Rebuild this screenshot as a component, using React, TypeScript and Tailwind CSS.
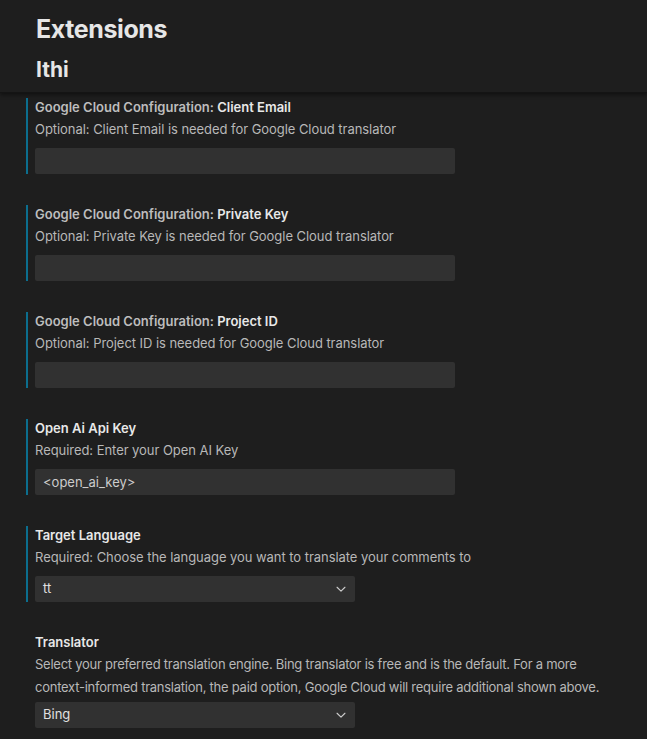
import React from 'react';

type Setting = {
  prefix?: string;
  title: string;
  desc: string[];
  kind: 'input' | 'select';
  value?: string;
  modified?: boolean;
};

const settings: Setting[] = [
  { prefix: 'Google Cloud Configuration: ', title: 'Client Email', desc: ['Optional: Client Email is needed for Google Cloud translator'], kind: 'input', modified: true },
  { prefix: 'Google Cloud Configuration: ', title: 'Private Key', desc: ['Optional: Private Key is needed for Google Cloud translator'], kind: 'input', modified: true },
  { prefix: 'Google Cloud Configuration: ', title: 'Project ID', desc: ['Optional: Project ID is needed for Google Cloud translator'], kind: 'input', modified: true },
  { title: 'Open Ai Api Key', desc: ['Required: Enter your Open AI Key'], kind: 'input', value: '<open_ai_key>', modified: true },
  { title: 'Target Language', desc: ['Required: Choose the language you want to translate your comments to'], kind: 'select', value: 'tt', modified: true },
  {
    title: 'Translator',
    desc: [
      'Select your preferred translation engine. Bing translator is free and is the default. For a more',
      'context-informed translation, the paid option, Google Cloud will require additional shown above.',
    ],
    kind: 'select',
    value: 'Bing',
  },
];

const Chevron = () => (
  <svg width="14" height="14" viewBox="0 0 16 16" fill="none" stroke="#cccccc" strokeWidth="1.3" strokeLinecap="round" strokeLinejoin="round">
    <path d="M3.5 6l4.5 4.5L12.5 6" />
  </svg>
);

function SettingItem({ s }: { s: Setting }) {
  const multi = s.desc.length > 1;
  return (
    <div className="pl-[26px] mb-[31px]">
      <div className={`border-l-2 pl-[7px] ${s.modified ? 'border-[#0c6e8e]' : 'border-transparent'}`}>
        <div className="h-[18px] leading-[18px] text-[13px] font-semibold text-[#bdbdbd]">
          {s.prefix}
          <span className="text-[#e8e8e8]">{s.title}</span>
        </div>
        <div className={`mt-[2px] text-[13px] leading-[23px] text-[#b8b8b8] ${multi ? 'tracking-[-0.25px]' : 'tracking-[-0.05px]'}`}>
          {s.desc.map((d, i) => (
            <div key={i}>{d}</div>
          ))}
        </div>
        {s.kind === 'input' ? (
          <div className="mt-[7px] h-[26px] w-[420px] rounded-[2px] bg-[#313131] px-[8px] text-[13px] leading-[26px] text-[#cccccc]">
            {s.value}
          </div>
        ) : (
          <div className={`${multi ? 'mt-[3px]' : 'mt-[7px]'} flex h-[26px] w-[320px] items-center justify-between rounded-[2px] bg-[#313131] pl-[8px] pr-[7px] text-[13px] text-[#e0e0e0]`}>
            <span>{s.value}</span>
            <Chevron />
          </div>
        )}
      </div>
    </div>
  );
}

export default function App() {
  return (
    <div className="min-h-screen w-[647px] h-[739px] overflow-hidden bg-[#1e1e1e]" style={{ fontFamily: 'Inter, "Noto Sans", sans-serif' }}>
      <header className="h-[93px] border-b border-[#141414] shadow-[0_2px_4px_rgba(0,0,0,0.45)] pl-[36px] pt-[12px] relative">
        <h1 className="text-[25px] font-bold leading-[34px] text-[#e6e6e6] tracking-[-0.4px]">Extensions</h1>
        <h2 className="mt-[10px] text-[21px] font-bold leading-[28px] text-[#e6e6e6]">Ithi</h2>
      </header>
      <main className="pt-[5px]">
        {settings.map((s) => (
          <SettingItem key={(s.prefix ?? '') + s.title} s={s} />
        ))}
      </main>
    </div>
  );
}
